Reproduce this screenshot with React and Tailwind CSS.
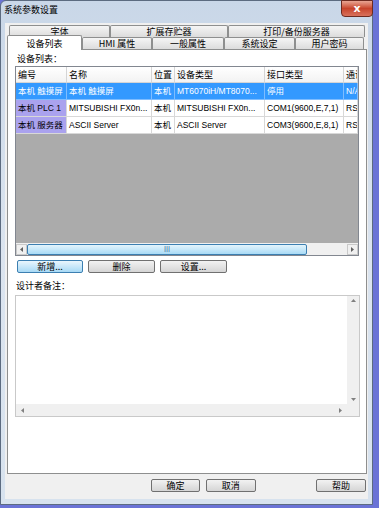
import React from 'react';

const cjk = { fontFamily: '"Noto Sans CJK SC", "Liberation Sans", sans-serif' };
const latin = { fontFamily: '"Liberation Sans", "Noto Sans CJK SC", sans-serif' };

const cols = [51, 85, 23, 90, 79, 14];
const headers = ['编号', '名称', '位置', '设备类型', '接口类型', '通讯'];
const rows = [
  ['本机 触摸屏', '本机 触摸屏', '本机', 'MT6070iH/MT8070...', '停用', 'N/A'],
  ['本机 PLC 1', 'MITSUBISHI FX0n...', '本机', 'MITSUBISHI FX0n...', 'COM1(9600,E,7,1)', 'RS232'],
  ['本机 服务器', 'ASCII Server', '本机', 'ASCII Server', 'COM3(9600,E,8,1)', 'RS232'],
];

const Btn = ({ children, w, focus }) => (
  <div
    className={`h-[13px] flex items-center justify-center rounded-[2px] border text-[9px] leading-none text-black ${
      focus
        ? 'border-[#3c7fb1] bg-gradient-to-b from-[#eaf6fd] to-[#a7d9f5]'
        : 'border-[#707070] bg-gradient-to-b from-[#f2f2f2] to-[#d5d5d5]'
    }`}
    style={{ width: w }}
  >
    {children}
  </div>
);

const Arrow = ({ dir }) => (
  <div className="w-[11px] h-[11px] flex items-center justify-center bg-[#f0f0f0] border border-[#c9c9c9]">
    <svg width="5" height="5" viewBox="0 0 5 5">
      {dir === 'l' && <path d="M4 0 L1 2.5 L4 5Z" fill="#606060" />}
      {dir === 'r' && <path d="M1 0 L4 2.5 L1 5Z" fill="#606060" />}
    </svg>
  </div>
);

const Tab = ({ label, w }) => (
  <div
    className="h-[12px] flex items-center justify-center border border-[#8e8f8f] border-b-0 rounded-t-[2px] bg-gradient-to-b from-[#f5f5f5] to-[#dcdcdc] text-[9px] leading-none text-black"
    style={{ width: w }}
  >
    {label}
  </div>
);

export default function App() {
  return (
    <div className="w-[379px] h-[508px] bg-[#6a73d6] overflow-hidden" style={cjk}>
      <div className="w-[373px] h-[505px] bg-gradient-to-b from-[#c9d7e8] via-[#dbe4ef] to-[#d7e2ee] border border-[#5c6b80] rounded-t-[6px] flex flex-col">
        {/* title bar */}
        <div className="h-[22px] flex items-start justify-between">
          <div className="pl-[3px] pt-[3px] text-[9px] leading-[11px] text-black">系统参数设置</div>
          <div className="w-[32px] h-[17px] -mt-px mr-[-1px] rounded-b-[4px] border border-[#6d2a20] bg-gradient-to-b from-[#e8a493] via-[#c7432b] to-[#d8715c] flex items-center justify-center text-white text-[11px] font-bold leading-none" style={{ fontFamily: '"DejaVu Sans", sans-serif' }}>
            x
          </div>
        </div>

        {/* client */}
        <div className="flex-1 mx-[4px] mb-[5px] bg-[#f0f0f0] flex flex-col pt-[2px] px-[2px]">
          {/* tab rows */}
          <div className="flex pl-[2px]">
            <Tab label="字体" w={101} />
            <Tab label="扩展存贮器" w={118} />
            <Tab label="打印/备份服务器" w={137} />
          </div>
          <div className="flex items-end -mt-[2px] relative">
            <div className="w-[75px] h-[15px] bg-white border border-[#8e8f8f] border-b-0 rounded-t-[2px] flex items-center justify-center text-[9px] leading-none text-black relative z-10 mb-[-1px]">
              设备列表
            </div>
            <div className="flex">
              <Tab label="HMI 属性" w={70} />
              <Tab label="一般属性" w={72} />
              <Tab label="系统设定" w={71} />
              <Tab label="用户密码" w={69} />
            </div>
          </div>

          {/* panel */}
          <div className="w-[360px] h-[425px] bg-white border border-[#8e8f8f] flex flex-col px-[7px]">
            <div className="text-[9px] leading-none text-black pt-[4px] pl-[2px]">设备列表：</div>
            <div className="mt-[3px] w-[344px] h-[190px] border border-[#828790] bg-[#ababab] flex flex-col">
              <div className="flex h-[16px] bg-white border-b border-[#d5d5d5]">
                {headers.map((h, i) => (
                  <div
                    key={h}
                    className="border-r border-[#d5d5d5] px-[2px] flex items-center text-[9px] leading-none text-black overflow-hidden whitespace-nowrap bg-gradient-to-b from-white to-[#f3f3f3]"
                    style={{ width: cols[i] }}
                  >
                    {h}
                  </div>
                ))}
              </div>
              {rows.map((r, ri) => (
                <div key={ri} className="flex h-[17px]">
                  {r.map((c, ci) => {
                    const sel = ri === 0;
                    const bg = sel ? 'bg-[#3399ff] text-white' : ci === 0 ? 'bg-[#aaa2ee] text-black' : 'bg-white text-black';
                    return (
                      <div
                        key={ci}
                        className={`${bg} border-r border-b ${sel ? 'border-[#7fbdff]' : 'border-[#d8d8d8]'} px-[2px] flex items-center text-[8.5px] leading-none overflow-hidden whitespace-nowrap`}
                        style={{ width: cols[ci], ...latin }}
                      >
                        {c}
                      </div>
                    );
                  })}
                </div>
              ))}
              <div className="flex-1" />
              <div className="h-[12px] bg-[#f0f0f0] flex items-center">
                <Arrow dir="l" />
                <div className="w-[280px] h-[11px] rounded-[2px] border border-[#3c7fb1] bg-gradient-to-b from-[#e3f4fc] to-[#a9dbf6] flex items-center justify-center text-[7px] text-[#3a6d93] leading-none">III</div>
                <div className="flex-1" />
                <Arrow dir="r" />
              </div>
            </div>

            <div className="mt-[4px] flex gap-[5px] pl-[2px]">
              <Btn w={66} focus>新增...</Btn>
              <Btn w={67}>删除</Btn>
              <Btn w={67}>设置...</Btn>
            </div>

            <div className="text-[9px] leading-none text-black mt-[8px] pl-[1px]">设计者备注：</div>
            <div className="mt-[5px] w-[345px] h-[122px] border border-[#c9c9c9] bg-white flex flex-col">
              <div className="flex-1 flex">
                <div className="flex-1" />
                <div className="w-[12px] bg-[#f0f0f0] flex flex-col items-center justify-between py-[2px]">
                  <svg width="5" height="5" viewBox="0 0 5 5"><path d="M0 4 L2.5 1 L5 4Z" fill="#808080" /></svg>
                  <svg width="5" height="5" viewBox="0 0 5 5"><path d="M0 1 L2.5 4 L5 1Z" fill="#808080" /></svg>
                </div>
              </div>
              <div className="h-[12px] flex">
                <div className="flex-1 bg-[#f0f0f0] flex items-center justify-between px-[4px]">
                  <svg width="5" height="5" viewBox="0 0 5 5"><path d="M4 0 L1 2.5 L4 5Z" fill="#808080" /></svg>
                  <svg width="5" height="5" viewBox="0 0 5 5"><path d="M1 0 L4 2.5 L1 5Z" fill="#808080" /></svg>
                </div>
                <div className="w-[12px] bg-[#f0f0f0]" />
              </div>
            </div>
          </div>

          {/* bottom buttons */}
          <div className="flex mt-[5px] pl-[144px]">
            <Btn w={50}>确定</Btn>
            <div className="w-[6px]" />
            <Btn w={51}>取消</Btn>
            <div className="w-[62px]" />
            <Btn w={51}>帮助</Btn>
          </div>
        </div>
      </div>
    </div>
  );
}
